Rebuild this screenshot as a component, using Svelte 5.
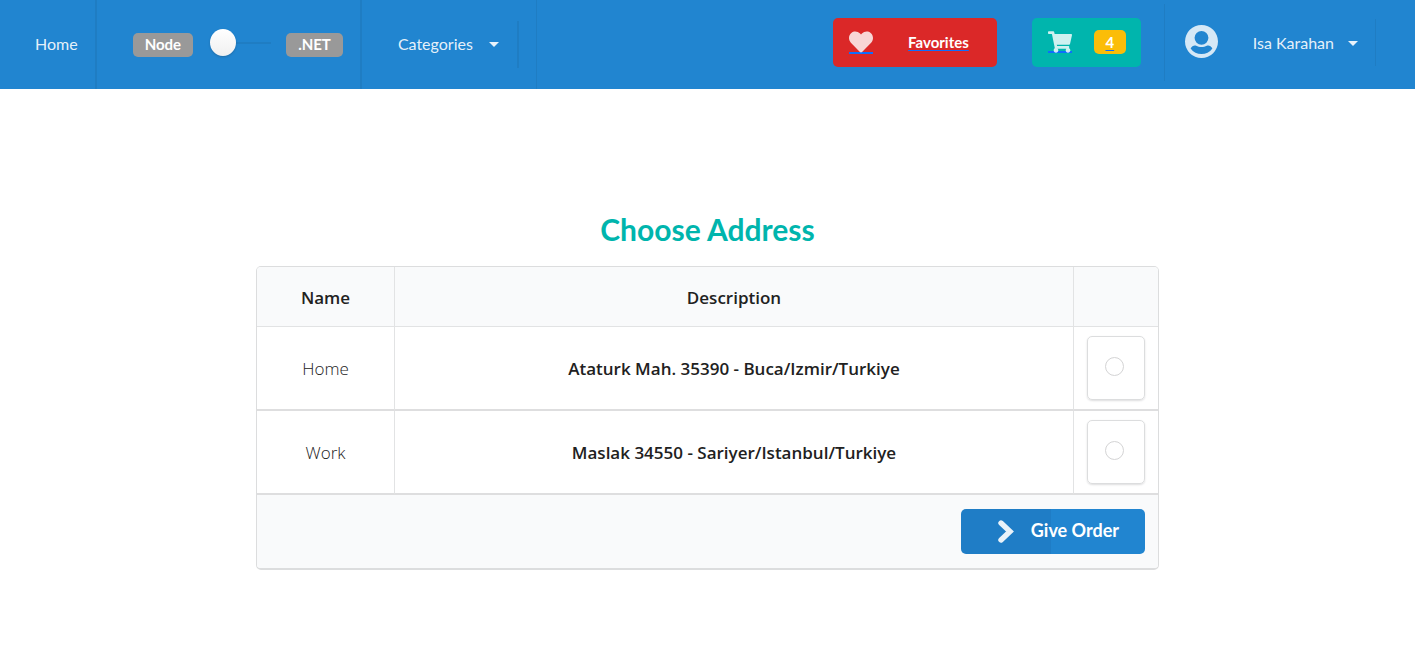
<script>
  const addresses = [
    { id: 'home', name: 'Home', description: 'Ataturk Mah. 35390 - Buca/Izmir/Turkiye' },
    { id: 'work', name: 'Work', description: 'Maslak 34550 - Sariyer/Istanbul/Turkiye' }
  ];
  const cartCount = 4;
  let selected = $state('');
  let dotNet = $state(false);
</script>

<header class="navbar">
  <nav class="group left">
    <a class="item home" href="#home">Home</a>
    <div class="item backend">
      <span class="tag">Node</span>
      <input class="toggle" type="checkbox" aria-label="Use .NET" bind:checked={dotNet} />
      <span class="tag">.NET</span>
    </div>
    <div class="item categories">
      <button class="dropdown" type="button">Categories <span class="caret"></span></button>
    </div>
  </nav>
  <div class="group right">
    <a class="action favorites" href="#favorites">
      <span class="icon heart">
        <svg viewBox="0 0 512 512" width="24" height="24" aria-hidden="true"><path d="M462.3 62.6C407.5 15.9 326 24.3 275.7 76.2L256 96.5l-19.7-20.3C186.1 24.3 104.5 15.9 49.7 62.6c-62.8 53.6-66.1 149.8-9.9 207.9l193.5 199.8c12.5 12.9 32.8 12.9 45.3 0l193.5-199.8c56.3-58.1 53-154.3-9.8-207.9z" /></svg>
      </span>
      <span class="linktext">Favorites</span>
    </a>
    <a class="action cart" href="#cart" aria-label="Cart">
      <span class="icon trolley">
        <svg viewBox="0 0 576 512" width="24" height="22" aria-hidden="true"><path d="M528.12 301.319l47.273-208C578.806 78.301 567.391 64 551.99 64H159.208l-9.166-44.81C147.758 8.021 137.93 0 126.529 0H24C10.745 0 0 10.745 0 24v16c0 13.255 10.745 24 24 24h69.883l70.248 343.435C147.325 417.1 136 435.222 136 456c0 30.928 25.072 56 56 56s56-25.072 56-56c0-15.674-6.447-29.835-16.824-40h209.647C430.447 426.165 424 440.326 424 456c0 30.928 25.072 56 56 56s56-25.072 56-56c0-22.172-12.888-41.332-31.579-50.405l5.517-24.276c3.413-15.018-8.002-29.319-23.403-29.319H218.117l-6.545-32h293.145c11.206 0 20.92-7.754 23.403-18.681z" /></svg>
      </span>
      <span class="badge"><span class="linktext">{cartCount}</span></span>
    </a>
    <div class="account">
      <svg viewBox="0 0 100 100" width="33" height="33" aria-hidden="true"><path fill-rule="evenodd" d="M50 0a50 50 0 1 1 0 100a50 50 0 1 1 0-100zM50 18a21 21 0 1 0 0 42a21 21 0 1 0 0-42zM17 71C21 64 28 60 34 63C43 68 57 68 66 63C72 60 79 64 83 71C75 82 63 88 50 88C37 88 25 82 17 71z" /></svg>
      <button class="dropdown user" type="button">Isa Karahan <span class="caret"></span></button>
    </div>
  </div>
</header>

<main>
  <h1>Choose Address</h1>
  <table>
    <thead>
      <tr><th class="name">Name</th><th>Description</th><th class="pick"></th></tr>
    </thead>
    <tbody>
      {#each addresses as address (address.id)}
        <tr>
          <td class="light">{address.name}</td>
          <td class="strong">{address.description}</td>
          <td>
            <label class="card">
              <input type="radio" name="address" value={address.id} aria-label={address.name} bind:group={selected} />
            </label>
          </td>
        </tr>
      {/each}
    </tbody>
    <tfoot>
      <tr>
        <td colspan="3">
          <button class="order" type="button">
            <svg viewBox="0 0 16 23" width="16" height="23" aria-hidden="true"><path d="M3 3L12 11.5L3 20" fill="none" stroke="currentColor" stroke-width="5.4" stroke-linecap="round" /></svg>
            Give Order
          </button>
        </td>
      </tr>
    </tfoot>
  </table>
</main>

<style>
  :global(body) {
    margin: 0;
    background: #fff;
    font-family: Lato, "Liberation Sans", sans-serif;
  }
  :global(*) { box-sizing: border-box; }
  svg { display: block; fill: currentColor; }
  button { font: inherit; border: 0; background: none; cursor: pointer; }

  .navbar {
    display: flex;
    justify-content: space-between;
    height: 89px;
    background: #2185d0;
    color: rgba(255, 255, 255, 0.9);
    font-size: 16px;
  }
  .group { display: flex; }
  .item {
    display: flex;
    align-items: center;
    border-right: 2px solid #1f7dc3;
  }
  .home {
    padding: 0 17px 2px 35px;
    color: inherit;
    text-decoration: none;
  }
  .backend { padding: 0 17px 0 36px; }
  .tag {
    height: 24px;
    padding: 0 12px;
    border-radius: 5px;
    background: #999;
    color: #fff;
    font-size: 15px;
    font-weight: 700;
    line-height: 23px;
  }
  .toggle {
    appearance: none;
    display: flex;
    align-items: center;
    width: 61px;
    height: 28px;
    margin: 0 15px 4px 17px;
    background: linear-gradient(#1f7dc3, #1f7dc3) center / 100% 2px no-repeat;
    cursor: pointer;
  }
  .toggle::before {
    content: "";
    width: 26px;
    height: 27px;
    border-radius: 50%;
    background: linear-gradient(#fff, #f0f0f0);
    box-shadow: 0 1px 2px rgba(34, 36, 38, 0.25);
  }
  .toggle:checked { justify-content: flex-end; }
  .categories { padding-right: 17px; border-right-width: 1px; }
  .dropdown {
    display: flex;
    align-items: center;
    gap: 16px;
    height: 47px;
    padding: 0 18px 2px 36px;
    border-right: 2px solid #1f7dc3;
    color: inherit;
  }
  .caret {
    margin-top: 2px;
    border: 5px solid transparent;
    border-top-color: currentColor;
    border-bottom-width: 0;
  }

  .right { align-items: center; padding: 0 39px 4px 0; }
  .action {
    display: flex;
    align-items: center;
    height: 49px;
    margin-right: 35px;
    border-radius: 5px;
    color: #fff;
    font-size: 15px;
    font-weight: 700;
    text-decoration: none;
  }
  .favorites { gap: 35px; padding: 0 28px 2px 16px; background: #db2828; }
  .cart { gap: 22px; margin-right: 23px; padding: 0 15px 2px 16px; background: #00b5ad; }
  .icon {
    color: rgba(255, 255, 255, 0.81);
    background: linear-gradient(#0d6efd, #0d6efd) bottom / 100% 2px no-repeat;
  }
  .linktext { text-decoration: underline 1px #0d6efd; text-underline-offset: 2px; }
  .badge {
    min-width: 32px;
    border-radius: 5px;
    background: #fbbd08;
    line-height: 24px;
    text-align: center;
  }
  .account {
    display: flex;
    align-items: center;
    height: 77px;
    padding-left: 20px;
    border-left: 1px solid #1f7dc3;
    color: rgba(255, 255, 255, 0.81);
  }
  .account svg { margin-bottom: 2px; }
  .user { gap: 14px; padding: 0 17px 0 35px; border-right-width: 1px; color: rgba(255, 255, 255, 0.9); }

  main { width: 90%; max-width: 903px; margin: 0 auto; padding-top: 121px; }
  h1 {
    margin: 0 0 18px;
    color: #00b5ad;
    font-size: 30px;
    font-weight: 700;
    line-height: 38px;
    text-align: center;
  }
  table {
    width: 100%;
    border: 1px solid #dcddde;
    border-bottom-width: 2px;
    border-radius: 5px;
    border-spacing: 0;
    overflow: hidden;
    color: #212121;
    font-family: "Open Sans", "Noto Sans", sans-serif;
    font-size: 17px;
    text-align: center;
  }
  th, tfoot td { background: #f9fafb; }
  th {
    height: 60px;
    padding: 2px 0 0;
    border-bottom: 1px solid #e2e3e4;
    font-weight: 600;
  }
  .name { width: 138px; }
  .pick { width: 84px; }
  td { padding: 0; }
  tbody td { height: 84px; border-bottom: 2px solid #dededf; }
  th:not(:last-child), tbody td:not(:last-child) { border-right: 1px solid #e2e3e4; }
  .light { font-weight: 300; }
  .strong { font-weight: 600; }
  .card {
    display: flex;
    align-items: center;
    justify-content: center;
    height: 64px;
    margin: 0 13px;
    padding: 0 3px 3px 0;
    border: 1px solid #dcddde;
    border-radius: 5px;
    box-shadow: 0 1px 2px rgba(34, 36, 38, 0.15);
  }
  .card input {
    appearance: none;
    width: 19px;
    height: 19px;
    margin: 0;
    border: 1px solid #d4d4d5;
    border-radius: 50%;
    background: #fff;
  }
  .card input:checked { background: radial-gradient(#212121 4px, #fff 5px); }
  tfoot td { padding: 14px 13px; }
  .order {
    display: flex;
    align-items: center;
    gap: 17px;
    height: 45px;
    margin-left: auto;
    padding: 0 26px 3px 37px;
    border-radius: 5px;
    background: linear-gradient(90deg, #1f7dc6 90px, #2185d0 90px);
    color: #fff;
    font: 700 18px/24px Lato, sans-serif;
  }
  .order svg { margin-top: 3px; opacity: 0.9; }
</style>
